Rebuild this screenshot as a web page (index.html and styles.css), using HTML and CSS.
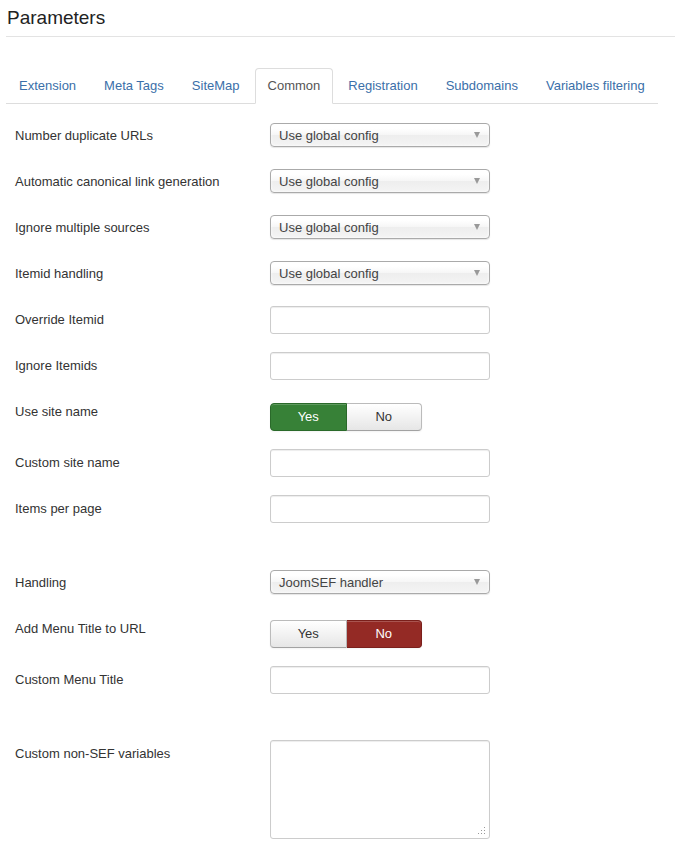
FILE: index.html
```html
<!DOCTYPE html>
<html>
<head>
<meta charset="utf-8">
<link rel="stylesheet" href="styles.css">
</head>
<body>
<div class="page">
  <h2 class="title">Parameters</h2>
  <ul class="tabs">
    <li><a>Extension</a></li>
    <li><a>Meta Tags</a></li>
    <li><a>SiteMap</a></li>
    <li class="active"><a>Common</a></li>
    <li><a>Registration</a></li>
    <li><a>Subdomains</a></li>
    <li><a>Variables filtering</a></li>
  </ul>
  <div class="tab-content">
    <div class="group"><label>Number duplicate URLs</label><div class="controls"><div class="select"><span>Use global config</span><i class="arrow"></i></div></div></div>
    <div class="group"><label>Automatic canonical link generation</label><div class="controls"><div class="select"><span>Use global config</span><i class="arrow"></i></div></div></div>
    <div class="group"><label>Ignore multiple sources</label><div class="controls"><div class="select"><span>Use global config</span><i class="arrow"></i></div></div></div>
    <div class="group"><label>Itemid handling</label><div class="controls"><div class="select"><span>Use global config</span><i class="arrow"></i></div></div></div>
    <div class="group"><label>Override Itemid</label><div class="controls"><input class="text" type="text"></div></div>
    <div class="group"><label>Ignore Itemids</label><div class="controls"><input class="text" type="text"></div></div>
    <div class="group"><label>Use site name</label><div class="controls"><div class="toggle"><span class="btn yes-on">Yes</span><span class="btn">No</span></div></div></div>
    <div class="group"><label>Custom site name</label><div class="controls"><input class="text" type="text"></div></div>
    <div class="group"><label>Items per page</label><div class="controls"><input class="text" type="text"></div></div>
    <div class="spacer"></div>
    <div class="group"><label>Handling</label><div class="controls"><div class="select"><span>JoomSEF handler</span><i class="arrow"></i></div></div></div>
    <div class="group"><label>Add Menu Title to URL</label><div class="controls"><div class="toggle"><span class="btn">Yes</span><span class="btn no-on">No</span></div></div></div>
    <div class="group"><label>Custom Menu Title</label><div class="controls"><input class="text" type="text"></div></div>
    <div class="spacer"></div>
    <div class="group"><label>Custom non-SEF variables</label><div class="controls"><div class="area-wrap"><textarea class="area"></textarea><svg class="grip" width="8" height="8" viewBox="0 0 8 8"><rect x="6" y="0" width="1" height="1"/><rect x="6" y="3" width="1" height="1"/><rect x="3" y="3" width="1" height="1"/><rect x="6" y="6" width="1" height="1"/><rect x="3" y="6" width="1" height="1"/><rect x="0" y="6" width="1" height="1"/></svg></div></div></div>
  </div>
</div>
</body>
</html>
```
FILE: styles.css
```css
html, body {
  margin: 0;
  padding: 0;
  background: #fff;
}
body {
  font-family: "Liberation Sans", Arial, Helvetica, sans-serif;
  font-size: 13px;
  color: #333;
}
.page {
  padding-left: 6px;
}
.title {
  margin: 6px 0 0;
  padding: 0 0 6px 1px;
  font-size: 19px;
  line-height: 24px;
  font-weight: normal;
  color: #222;
  border-bottom: 1px solid #e3e3e3;
}
.tabs {
  list-style: none;
  margin: 31px 17px 0 0;
  padding: 0;
  display: flex;
  border-bottom: 1px solid #ddd;
}
.tabs li {
  flex: none;
  margin-bottom: -1px;
  white-space: nowrap;
}
.tabs a {
  display: block;
  padding: 8px 12px;
  line-height: 18px;
  margin-right: 2px;
  border: 1px solid transparent;
  border-radius: 4px 4px 0 0;
  color: #3b6fa9;
  cursor: pointer;
}
.tabs .active a {
  color: #555;
  background: #fff;
  border-color: #ddd #ddd transparent;
}
.tab-content {
  margin-top: 18px;
  padding-left: 9px;
}
.group {
  display: flex;
  margin-bottom: 18px;
}
.group label {
  width: 255px;
  flex: none;
  line-height: 28px;
  color: #333;
}
.controls {
  min-height: 28px;
}
.select {
  margin-top: 1px;
  width: 220px;
  height: 24px;
  box-sizing: border-box;
  border: 1px solid #aaa;
  border-radius: 4px;
  background: linear-gradient(#fff 20%, #f6f6f6 50%, #eee 52%, #f4f4f4 100%);
  box-shadow: inset 0 0 3px #fff, 0 1px 1px rgba(0,0,0,0.1);
  display: flex;
  align-items: center;
  justify-content: space-between;
  padding: 0 9px 0 8px;
  color: #444;
}
.arrow {
  width: 0;
  height: 0;
  border-left: 3.5px solid transparent;
  border-right: 3.5px solid transparent;
  border-top: 6px solid #999;
}
.text {
  display: block;
  width: 220px;
  height: 28px;
  box-sizing: border-box;
  margin: 0;
  border: 1px solid #ccc;
  border-radius: 3px;
  box-shadow: inset 0 1px 1px rgba(0,0,0,0.075);
  background: #fff;
  padding: 4px 6px;
  font: inherit;
}
.toggle {
  margin-top: 5px;
  display: flex;
  width: 152px;
}
.btn {
  flex: 1;
  height: 28px;
  box-sizing: border-box;
  line-height: 26px;
  text-align: center;
  color: #333;
  border: 1px solid #bbb;
  border-bottom-color: #a2a2a2;
  background: linear-gradient(#fff, #e6e6e6);
  box-shadow: inset 0 1px 0 rgba(255,255,255,0.2), 0 1px 2px rgba(0,0,0,0.05);
}
.btn:first-child {
  border-radius: 4px 0 0 4px;
}
.btn:last-child {
  border-radius: 0 4px 4px 0;
  border-left: 0;
}
.btn.yes-on {
  background: #378137;
  border-color: #2a6a2a;
  color: #fff;
}
.btn.no-on {
  background: #942a25;
  border-color: #7a1f1b;
  color: #fff;
}
.area-wrap {
  position: relative;
  width: 220px;
  height: 99px;
}
.area {
  display: block;
  width: 220px;
  height: 99px;
  box-sizing: border-box;
  margin: 0;
  border: 1px solid #ccc;
  border-radius: 3px;
  box-shadow: inset 0 1px 1px rgba(0,0,0,0.075);
  resize: none;
  font: inherit;
}
.grip {
  position: absolute;
  right: 4px;
  bottom: 4px;
  fill: #999;
}
.spacer {
  height: 28px;
}
```
